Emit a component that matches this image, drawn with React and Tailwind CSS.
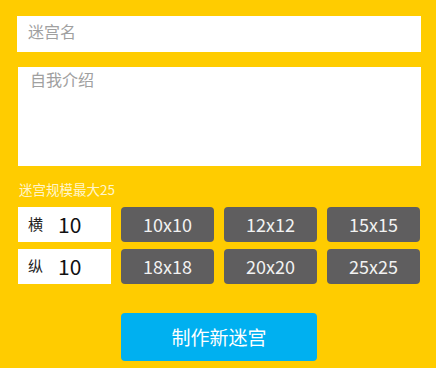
import React, { useState } from 'react';

const sizes = ['10x10', '12x12', '15x15', '18x18', '20x20', '25x25'];

export default function App() {
  const [w, setW] = useState('10');
  const [h, setH] = useState('10');

  const pick = (s) => {
    const [a, b] = s.split('x');
    setW(a);
    setH(b);
  };

  return (
    <div
      className="w-[436px] h-[368px] bg-[#ffcc00] overflow-hidden"
      style={{ fontFamily: '"Noto Sans CJK SC", "Noto Sans", sans-serif' }}
    >
      <div className="pt-[16px] pl-[17px] w-[421px]">
        {/* name */}
        <input
          placeholder="迷宫名"
          className="block w-[404px] h-[36px] bg-white px-[11px] pb-[6px] text-[16px] text-[#333] placeholder:text-[#a0a0a0] outline-none"
        />

        {/* intro */}
        <textarea
          placeholder="自我介绍"
          className="block mt-[15px] ml-[1px] w-[403px] h-[99px] bg-white px-[12px] pt-0 text-[16px] leading-[24px] text-[#333] placeholder:text-[#a0a0a0] outline-none resize-none"
        />

        <div className="mt-[13px] ml-[2px] h-[20px] text-[13.5px] leading-[20px] text-[#fff5cc]">
          迷宫规模最大25
        </div>

        {/* size grid */}
        <div className="mt-[8px] ml-[1px] w-[402px] grid grid-cols-4 gap-x-[10px] gap-y-[7px]">
          <label className="col-start-1 row-start-1 h-[35px] bg-white flex items-center pl-[10px]">
            <span className="text-[15px] text-[#222]">横</span>
            <input
              value={w}
              onChange={(e) => setW(e.target.value)}
              className="w-[50px] ml-[15px] text-[21px] text-[#111] outline-none bg-transparent"
            />
          </label>
          <label className="col-start-1 row-start-2 h-[35px] bg-white flex items-center pl-[10px]">
            <span className="text-[15px] text-[#222]">纵</span>
            <input
              value={h}
              onChange={(e) => setH(e.target.value)}
              className="w-[50px] ml-[15px] text-[21px] text-[#111] outline-none bg-transparent"
            />
          </label>
          {sizes.map((s, i) => (
            <button
              key={s}
              onClick={() => pick(s)}
              className={`h-[35px] rounded-[4px] bg-[#5f5e5f] text-[#f2f2f2] text-[18px] flex items-center justify-center ${
                i < 3 ? 'row-start-1' : 'row-start-2'
              }`}
            >
              {s}
            </button>
          ))}

          <button className="col-start-2 col-span-2 row-start-3 mt-[22px] h-[48px] rounded-[4px] bg-[#00b0f0] text-white text-[19px] flex items-center justify-center">
            制作新迷宫
          </button>
        </div>
      </div>
    </div>
  );
}
